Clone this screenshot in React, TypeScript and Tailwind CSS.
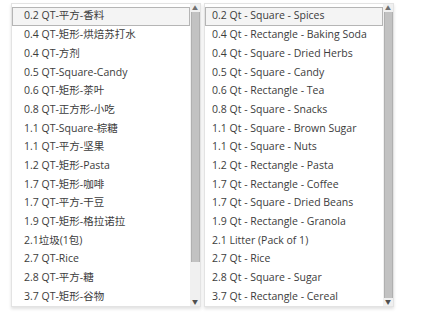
import React from "react";

const zh = [
  "0.2 QT-平方-香料",
  "0.4 QT-矩形-烘焙苏打水",
  "0.4 QT-方剂",
  "0.5 QT-Square-Candy",
  "0.6 QT-矩形-茶叶",
  "0.8 QT-正方形-小吃",
  "1.1 QT-Square-棕糖",
  "1.1 QT-平方-坚果",
  "1.2 QT-矩形-Pasta",
  "1.7 QT-矩形-咖啡",
  "1.7 QT-平方-干豆",
  "1.9 QT-矩形-格拉诺拉",
  "2.1垃圾(1包)",
  "2.7 QT-Rice",
  "2.8 QT-平方-糖",
  "3.7 QT-矩形-谷物",
];

const en = [
  "0.2 Qt - Square - Spices",
  "0.4 Qt - Rectangle - Baking Soda",
  "0.4 Qt - Square - Dried Herbs",
  "0.5 Qt - Square - Candy",
  "0.6 Qt - Rectangle - Tea",
  "0.8 Qt - Square - Snacks",
  "1.1 Qt - Square - Brown Sugar",
  "1.1 Qt - Square - Nuts",
  "1.2 Qt - Rectangle - Pasta",
  "1.7 Qt - Rectangle - Coffee",
  "1.7 Qt - Square - Dried Beans",
  "1.9 Qt - Rectangle - Granola",
  "2.1 Litter (Pack of 1)",
  "2.7 Qt - Rice",
  "2.8 Qt - Square - Sugar",
  "3.7 Qt - Rectangle - Cereal",
];

function ListBox(p: { items: string[]; thumbBottom: string; pad: string }) {
  return (
    <section className="flex flex-row w-[190px] h-[304px] border border-[#e3e3e3] bg-white shadow-[0_2px_3px_rgba(0,0,0,0.12)]">
      <ul className="flex-1 flex flex-col pt-[3px]">
        {p.items.map((t, i) => (
          <li
            key={i}
            className={`h-[18.75px] flex items-center ${p.pad} text-[10.5px] text-[#3c3c3c] whitespace-nowrap ${
              i === 0 ? "border border-[#b5b5b5] bg-[#f4f4f4]" : "border border-transparent"
            }`}
          >
            {t}
          </li>
        ))}
      </ul>
      <div className="w-[10px] flex flex-col items-center bg-[#f0f0f0]">
        <div className="h-[8px] flex items-center justify-center text-[6px] leading-none text-[#707070]">
          ▲
        </div>
        <div className={`w-[9px] bg-[#c2c2c2] border-x border-[#b0b0b0] ${p.thumbBottom}`} />
        <div className="flex-1" />
        <div className="h-[8px] flex items-center justify-center text-[6px] leading-none text-[#505050]">
          ▼
        </div>
      </div>
    </section>
  );
}

export default function App() {
  return (
    <main
      className="w-[441px] h-[323px] bg-white flex flex-row gap-[3px] pl-[11px] pt-[3px]"
      style={{ fontFamily: '"Open Sans", "Noto Sans CJK SC", sans-serif' }}
    >
      <ListBox items={zh} thumbBottom="h-[250px]" pad="pl-[11px]" />
      <ListBox items={en} thumbBottom="h-[288px]" pad="pl-[6px]" />
    </main>
  );
}
